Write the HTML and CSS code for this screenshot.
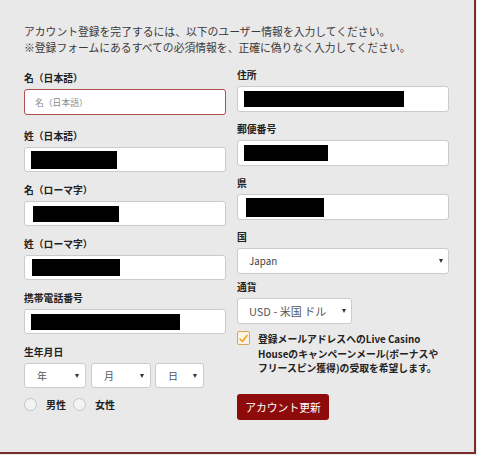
FILE: index.html
```html
<!DOCTYPE html>
<html lang="ja">
<head>
<meta charset="utf-8">
<title>アカウント登録</title>
<link rel="stylesheet" href="styles.css">
</head>
<body>
<div class="panel">
  <p class="intro">アカウント登録を完了するには、以下のユーザー情報を入力してください。<br>※登録フォームにあるすべての必須情報を、正確に偽りなく入力してください。</p>
  <div class="form">
    <div class="col col-left">
      <div class="group is-error">
        <label class="label">名（日本語）</label>
        <div class="input is-error"><span class="placeholder">名（日本語）</span></div>
      </div>
      <div class="group">
        <label class="label">姓（日本語）</label>
        <div class="input"><span class="redact" style="width:86px;height:18px"></span></div>
      </div>
      <div class="group">
        <label class="label">名（ローマ字）</label>
        <div class="input"><span class="redact" style="width:86px;height:16px;margin-left:2px"></span></div>
      </div>
      <div class="group">
        <label class="label">姓（ローマ字）</label>
        <div class="input"><span class="redact" style="width:88px;height:17px;margin-left:1px"></span></div>
      </div>
      <div class="group">
        <label class="label">携帯電話番号</label>
        <div class="input"><span class="redact" style="width:149px;height:16px"></span></div>
      </div>
      <div class="group">
        <label class="label">生年月日</label>
        <div class="dob">
          <div class="select sel-year"><span>年</span><i class="arrow"></i></div>
          <div class="select sel-month"><span>月</span><i class="arrow"></i></div>
          <div class="select sel-day"><span>日</span><i class="arrow"></i></div>
        </div>
        <div class="genders">
          <span class="radio"></span><span class="radio-text">男性</span>
          <span class="radio"></span><span class="radio-text">女性</span>
        </div>
      </div>
    </div>
    <div class="col col-right">
      <div class="group">
        <label class="label">住所</label>
        <div class="input"><span class="redact" style="width:160px;height:16px"></span></div>
      </div>
      <div class="group">
        <label class="label">郵便番号</label>
        <div class="input"><span class="redact" style="width:84px;height:16px"></span></div>
      </div>
      <div class="group">
        <label class="label">県</label>
        <div class="input"><span class="redact" style="width:78px;height:19px;margin-left:2px"></span></div>
      </div>
      <div class="group compact">
        <label class="label">国</label>
        <div class="select sel-country"><span>Japan</span><i class="arrow"></i></div>
      </div>
      <div class="group">
        <label class="label">通貨</label>
        <div class="select sel-currency"><span>USD - 米国 ドル</span><i class="arrow"></i></div>
        <div class="consent">
          <span class="checkbox"><svg width="11" height="11" viewBox="0 0 11 11"><polyline points="2,6 4.5,8.5 9,2.5" fill="none" stroke="#f0a21e" stroke-width="1.6" stroke-linecap="round" stroke-linejoin="round"/></svg></span>
          <p class="consent-text">登録メールアドレスへのLive Casino<br>Houseのキャンペーンメール(ボーナスや<br>フリースピン獲得)の受取を希望します。</p>
        </div>
        <button class="btn">アカウント更新</button>
      </div>
    </div>
  </div>
</div>
</body>
</html>
```

FILE: styles.css
```css
* { box-sizing: border-box; }
html, body { margin: 0; padding: 0; }
body {
  width: 477px;
  height: 455px;
  background: #ecebeb;
  font-family: "Noto Sans CJK JP", "Noto Sans", sans-serif;
  color: #2a2a2a;
  overflow: hidden;
}
.panel {
  width: 476px;
  height: 454px;
  padding: 24px 0 0 24px;
  border-right: 2px solid #7b2c2c;
  border-bottom: 2px solid #7b2c2c;
  background: #eae9e9;
}
.intro {
  margin: 0 0 13.6px;
  font-size: 10.8px;
  line-height: 15.7px;
  color: #3a3a3a;
}
.form {
  display: grid;
  grid-template-columns: 202px 212px;
  column-gap: 11px;
  align-items: start;
}
.col-left { padding-top: 3px; }
.group { margin-bottom: 12px; }
.col-right .group { margin-bottom: 11px; }
.group.is-error { margin-bottom: 15px; }
.col-right .group.compact { margin-bottom: 7px; }
.label {
  display: block;
  font-size: 9.8px;
  font-weight: 700;
  line-height: 13px;
  margin-bottom: 4px;
  color: #222;
}
.input {
  display: flex;
  align-items: center;
  height: 25px;
  padding: 0 6px;
  background: #fff;
  border: 1px solid #cbcbcb;
  border-radius: 3px;
}
.col-right .input { height: 26px; }
.input.is-error {
  height: 26px;
  border-color: #b0504c;
  padding-left: 10px;
}
.placeholder {
  font-size: 8.8px;
  color: #8a8a8a;
}
.redact {
  display: block;
  background: #000;
}
.select {
  position: relative;
  display: flex;
  align-items: center;
  height: 25px;
  background: #fff;
  border: 1px solid #cbcbcb;
  border-radius: 3px;
  font-size: 10px;
  color: #555;
}
.arrow {
  position: absolute;
  top: 10px;
  right: 6px;
  width: 0;
  height: 0;
  border-left: 2.5px solid transparent;
  border-right: 2.5px solid transparent;
  border-top: 4px solid #333;
}
.dob { display: flex; }
.sel-year { width: 62px; padding-left: 12px; margin-right: 5px; }
.sel-month { width: 60px; padding-left: 12px; margin-right: 4px; }
.sel-day { width: 49px; padding-left: 12px; }
.sel-country { height: 26px; padding-left: 11px; font-size: 9.8px; color: #444; }
.sel-country .arrow { right: 5px; top: 10px; }
.sel-currency { width: 115px; height: 26px; padding-left: 11px; font-size: 11px; color: #555; }
.sel-currency .arrow { right: 5px; top: 10px; }
.genders {
  display: flex;
  align-items: center;
  margin-top: 10px;
  height: 13px;
}
.radio {
  width: 13px;
  height: 13px;
  border: 1px solid #c4c4c4;
  border-radius: 50%;
  background: #f3f3f3;
}
.radio-text {
  font-size: 10px;
  font-weight: 700;
  color: #222;
  margin-left: 9px;
  margin-right: 7px;
  line-height: 13px;
}
.consent {
  display: flex;
  align-items: flex-start;
  margin-top: 7px;
}
.checkbox {
  flex: none;
  display: flex;
  align-items: center;
  justify-content: center;
  width: 13px;
  height: 14px;
  border: 1px solid #d7a458;
  border-radius: 2px;
  background: #fbf4e6;
}
.consent-text {
  margin: 1px 0 0 8px;
  font-size: 9.8px;
  font-weight: 700;
  line-height: 14.5px;
  color: #222;
}
.btn {
  display: block;
  margin-top: 18px;
  width: 92px;
  height: 26px;
  padding: 0;
  border: none;
  border-radius: 3px;
  background: #8e0b0b;
  color: #fff;
  font-family: "Noto Sans CJK JP", sans-serif;
  font-size: 10.8px;
  line-height: 26px;
  text-align: center;
}
```
